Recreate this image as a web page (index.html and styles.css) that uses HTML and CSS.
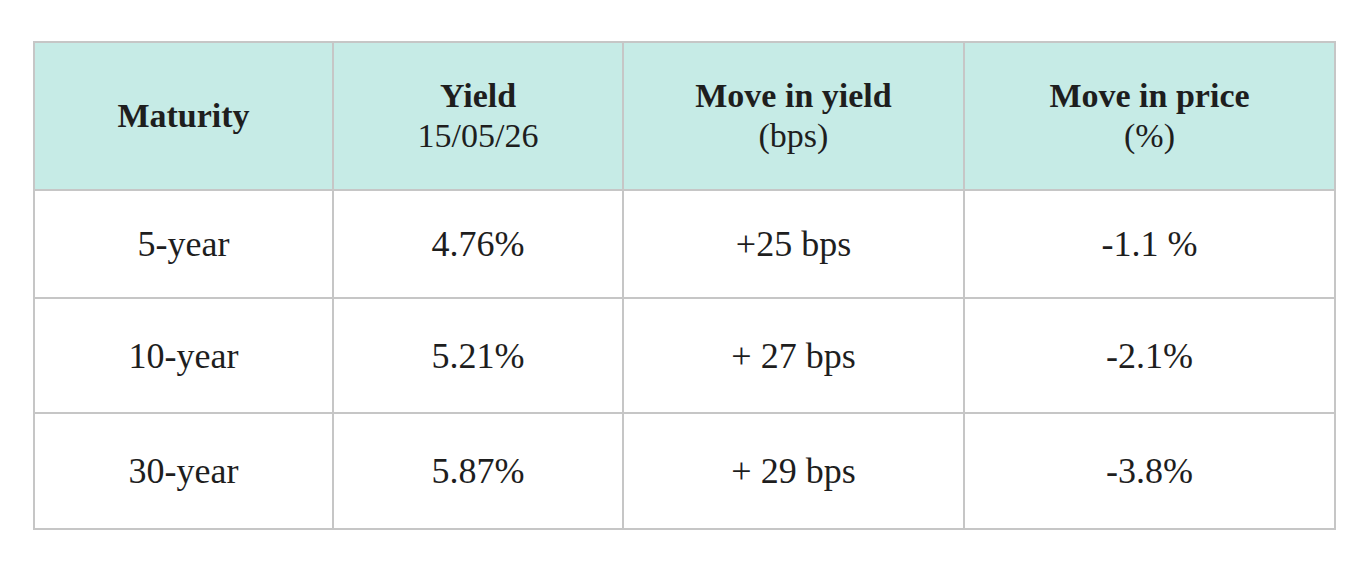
FILE: index.html
```html
<!DOCTYPE html>
<html lang="en">
<head>
<meta charset="utf-8">
<title>Yield moves</title>
<link rel="stylesheet" href="styles.css">
</head>
<body>
<table class="yields">
  <thead>
    <tr class="head-row">
      <th class="c1">Maturity</th>
      <th class="c2">Yield<span class="sub">15/05/26</span></th>
      <th class="c3">Move in yield<span class="sub">(bps)</span></th>
      <th class="c4">Move in price<span class="sub">(%)</span></th>
    </tr>
  </thead>
  <tbody>
    <tr class="r1"><td>5-year</td><td>4.76%</td><td>+25 bps</td><td>-1.1 %</td></tr>
    <tr class="r2"><td>10-year</td><td>5.21%</td><td>+ 27 bps</td><td>-2.1%</td></tr>
    <tr class="r3"><td>30-year</td><td>5.87%</td><td>+ 29 bps</td><td>-3.8%</td></tr>
  </tbody>
</table>
</body>
</html>
```

FILE: styles.css
```css
html, body {
  margin: 0;
  padding: 0;
  background: #ffffff;
}

.yields {
  margin: 41px 0 0 33px;
  border-collapse: separate;
  border-spacing: 2px;
  background: #c6c6c6;
  font-family: "Liberation Serif", "DejaVu Serif", serif;
  color: #1e1e1e;
  table-layout: fixed;
}

.yields th,
.yields td {
  padding: 0;
  text-align: center;
  vertical-align: middle;
  background: #ffffff;
}

.yields th {
  background: #c6ebe6;
  font-size: 34px;
  font-weight: bold;
  line-height: 40px;
}

.sub {
  display: block;
  font-weight: normal;
  font-size: 34px;
  line-height: 40px;
}

.c1 { width: 297px; }
.c2 { width: 288px; }
.c3 { width: 339px; }
.c4 { width: 369px; }

.head-row { height: 146px; }

.yields td {
  font-size: 36px;
  line-height: 40px;
}

.r1 { height: 106px; }
.r2 { height: 113px; }
.r3 { height: 114px; }
```
